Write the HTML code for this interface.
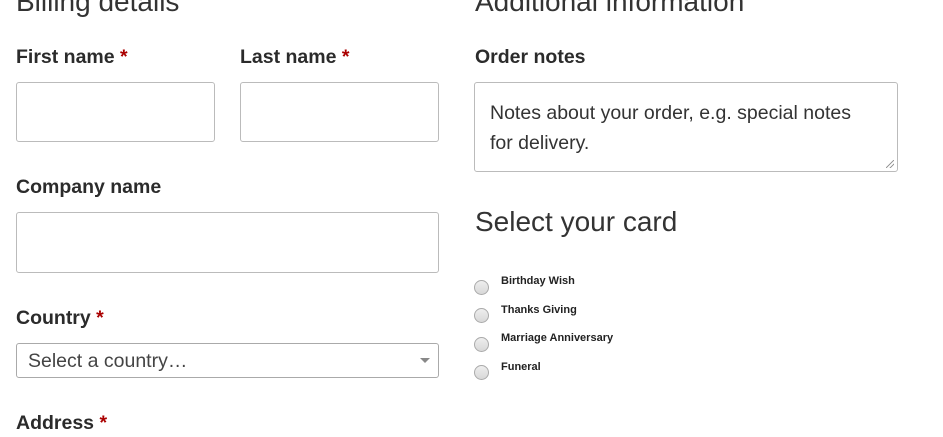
<!DOCTYPE html>
<html><head><style>
body{margin:0;width:943px;height:437px;overflow:hidden;background:#fff;font-family:"Liberation Sans",sans-serif;color:#333;position:relative}
.a{position:absolute}
h3{position:absolute;margin:0;font-weight:300;font-size:28px;color:#333;white-space:nowrap;line-height:1}
.l{position:absolute;font-weight:bold;font-size:19.5px;color:#2b2b2b;line-height:1;white-space:nowrap}
.l b{color:#a00;}
.in{position:absolute;border:1px solid #bbb;border-radius:3px;box-sizing:border-box;background:#fff}
.r{position:absolute;width:15px;height:15px;border-radius:50%;border:1px solid #aaa;background:linear-gradient(#eee,#d8d8d8);box-sizing:border-box}
.rl{position:absolute;font-size:11px;font-weight:bold;color:#222;white-space:nowrap;line-height:1}
</style></head><body>
<h3 style="left:16px;top:-12px">Billing details</h3>
<h3 style="left:475px;top:-12px">Additional information</h3>
<div class="l" style="left:16px;top:48px">First name <b>*</b></div>
<div class="l" style="left:240px;top:48px">Last name <b>*</b></div>
<div class="l" style="left:475px;top:48px">Order notes</div>
<div class="in" style="left:16px;top:82px;width:199px;height:60px"></div>
<div class="in" style="left:240px;top:82px;width:199px;height:60px"></div>
<div class="in" style="left:474px;top:82px;width:424px;height:90px;padding:15px 40px 14px 15px;font-size:19.5px;line-height:30px;color:#333">Notes about your order, e.g. special notes for delivery.</div>
<div class="l" style="left:16px;top:178px">Company name</div>
<div class="in" style="left:16px;top:212px;width:423px;height:61px"></div>
<h3 style="left:475px;top:208px">Select your card</h3>
<div class="l" style="left:16px;top:309px">Country <b>*</b></div>
<div class="in" style="left:16px;top:343px;width:423px;height:35px;border-color:#aaa;padding:6px 11px;font-size:19.5px;line-height:22px;color:#444">Select a country…<span class="a" style="right:8px;top:14px;border:5px solid transparent;border-top:5px solid #888;border-bottom:0"></span></div>
<div class="l" style="left:16px;top:414px">Address <b>*</b></div>
<div class="r" style="left:474px;top:280px"></div>
<div class="r" style="left:474px;top:308px"></div>
<div class="r" style="left:474px;top:337px"></div>
<div class="r" style="left:474px;top:365px"></div>
<div class="rl" style="left:501px;top:276px">Birthday Wish</div>
<div class="rl" style="left:501px;top:305px">Thanks Giving</div>
<div class="rl" style="left:501px;top:333px">Marriage Anniversary</div>
<div class="rl" style="left:501px;top:362px">Funeral</div>
<div class="a" style="left:886px;top:160px;width:8px;height:8px;background:linear-gradient(135deg,transparent 45%,#999 45%,#999 55%,transparent 55%,transparent 70%,#999 70%,#999 80%,transparent 80%)"></div>
</body></html>
